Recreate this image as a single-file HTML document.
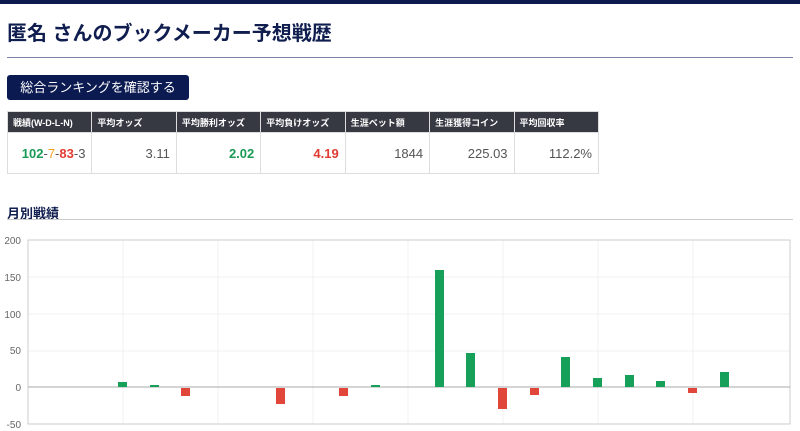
<!DOCTYPE html>
<html><head><meta charset="utf-8"><style>
body{margin:0;width:800px;height:431px;overflow:hidden;background:#fff;font-family:"Liberation Sans","Noto Sans CJK JP",sans-serif;position:relative}
.top{position:absolute;left:0;top:0;width:800px;height:4px;background:#0c1a4d}
h1{position:absolute;left:7px;top:17px;margin:0;font-size:20px;color:#0f1d4f;font-weight:bold;letter-spacing:0}
.hr{position:absolute;left:7px;top:57px;width:786px;height:1px;background:#7a82a3}
.btn{position:absolute;left:7px;top:75px;width:182px;height:25px;background:#0c1a52;border-radius:3px;color:#fff;font-size:13px;text-align:center;line-height:25px}
table{position:absolute;left:7px;top:111px;border-collapse:collapse;width:592px;table-layout:fixed}
th{background:#363842;color:#fff;font-size:9px;text-align:left;padding:0 5px;height:20px;border:1px solid #ddd;font-weight:bold}
td{height:40px;border:1px solid #ddd;text-align:right;padding:0 6px;font-size:13px;color:#555}
.g{color:#1a9a55;font-weight:bold}.r{color:#e23c32;font-weight:bold}.y{color:#f0a020}
h2{position:absolute;left:7px;top:203px;margin:0;font-size:13px;color:#0f1d4f}
.hr2{position:absolute;left:7px;top:219px;width:786px;height:1px;background:#ccc}
</style></head><body>
<div class="top"></div>
<h1>匿名 さんのブックメーカー予想戦歴</h1>
<div class="hr"></div>
<div class="btn">総合ランキングを確認する</div>
<table><tr><th>戦績(W-D-L-N)</th><th>平均オッズ</th><th>平均勝利オッズ</th><th>平均負けオッズ</th><th>生涯ベット額</th><th>生涯獲得コイン</th><th>平均回収率</th></tr>
<tr><td><span class="g">102</span>-<span class="y">7</span>-<span class="r">83</span>-3</td><td>3.11</td><td class="g">2.02</td><td class="r">4.19</td><td>1844</td><td>225.03</td><td>112.2%</td></tr></table>
<h2>月別戦績</h2>
<div class="hr2"></div>
<svg style="position:absolute;left:0;top:230px" width="800" height="201">
<g font-size="10" fill="#666" font-family="Liberation Sans,sans-serif" text-anchor="end">
<text x="21" y="14">200</text><text x="21" y="51">150</text><text x="21" y="88">100</text><text x="21" y="124">50</text><text x="21" y="161">0</text><text x="21" y="198">-50</text></g>
<g stroke="#f0f0f0"><line x1="28" y1="47" x2="790" y2="47"/><line x1="28" y1="84" x2="790" y2="84"/><line x1="28" y1="121" x2="790" y2="121"/>
<line x1="123" y1="10" x2="123" y2="194"/><line x1="218" y1="10" x2="218" y2="194"/><line x1="313" y1="10" x2="313" y2="194"/><line x1="408" y1="10" x2="408" y2="194"/><line x1="503" y1="10" x2="503" y2="194"/><line x1="598" y1="10" x2="598" y2="194"/><line x1="693" y1="10" x2="693" y2="194"/></g>
<rect x="28" y="10" width="762" height="184" fill="none" stroke="#ccc"/>
<line x1="28" y1="157" x2="790" y2="157" stroke="#aaa"/>
<g fill="#17a05a">
<rect x="118" y="152" width="9" height="5"/><rect x="150" y="155" width="9" height="2"/><rect x="371" y="155" width="9" height="2"/>
<rect x="435" y="40" width="9" height="117"/><rect x="466" y="123" width="9" height="34"/><rect x="561" y="127" width="9" height="30"/>
<rect x="593" y="148" width="9" height="9"/><rect x="625" y="145" width="9" height="12"/><rect x="656" y="151" width="9" height="6"/><rect x="720" y="142" width="9" height="15"/></g>
<g fill="#e0473a">
<rect x="181" y="158" width="9" height="8"/><rect x="276" y="158" width="9" height="16"/><rect x="339" y="158" width="9" height="8"/>
<rect x="498" y="158" width="9" height="21"/><rect x="530" y="158" width="9" height="7"/><rect x="688" y="158" width="9" height="5"/></g>
</svg>
</body></html>
